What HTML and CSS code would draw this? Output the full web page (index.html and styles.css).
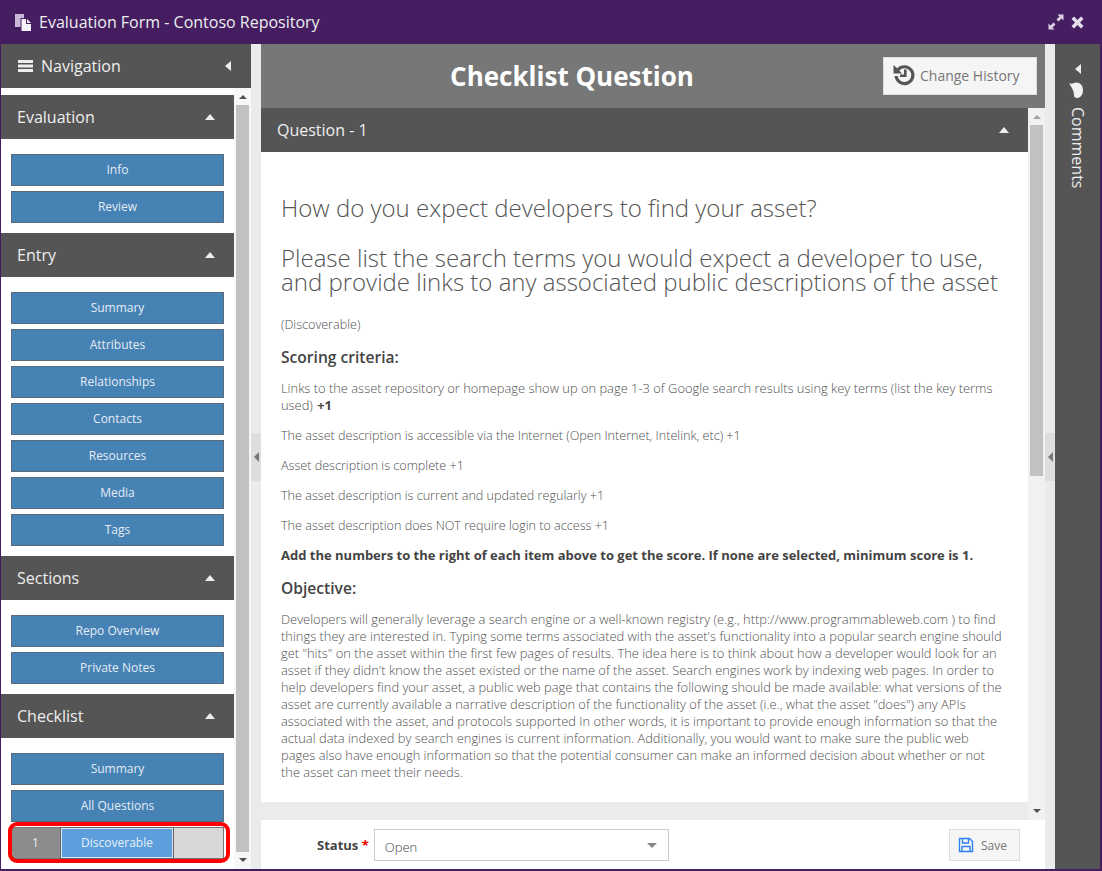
FILE: index.html
```html
<!DOCTYPE html>
<html lang="en">

<head>
    <meta charset="UTF-8">
    <title>Evaluation Form - Contoso Repository</title>
    <link rel="stylesheet" href="styles.css">
</head>

<body>
    <div class="window">
        <header class="title-bar">
            <svg class="title-icon" width="17" height="17" viewBox="0 0 17 17">
                <path d="M0 0h9v4H5.500v9H0z" fill="#c9b9d6" />
                <path d="M6.500 5H11v5h5v7H6.500z" fill="#f6f2f8" />
                <path d="M12 5l4 4h-4z" fill="#f6f2f8" />
            </svg>
            <span class="title-text">Evaluation Form - Contoso Repository</span>
            <svg class="title-action" width="16" height="16" viewBox="0 0 16 16">
                <path d="M9.500 0.500h6v6l-2-2-3 3-2-2 3-3zM6.500 15.500h-6v-6l2 2 3-3 2 2-3 3z" fill="#d9cfe0" />
            </svg>
            <svg class="title-action close" width="13" height="13" viewBox="0 0 13 13">
                <path d="M3 .5L6.500 4 10 .5 12.500 3 9 6.500l3.500 3.500-2.500 2.500L6.500 9 3 12.500.5 10 4 6.500.5 3z" fill="#e6dfeb" />
            </svg>
        </header>

        <div class="window-body">
            <aside class="nav-panel">
                <div class="nav-title">
                    <svg width="15" height="12" viewBox="0 0 15 12">
                        <path d="M0 0h15v3H0zM0 4.500h15v3H0zM0 9h15v3H0z" fill="#eee" />
                    </svg>
                    <span class="nav-title-text">Navigation</span>
                    <span class="arrow-left"></span>
                </div>
                <div class="nav-scroll">
                    <div class="nav-list">
                        <div class="section-head"><span>Evaluation</span><span class="arrow-up"></span></div>
                        <div class="section-links">
                            <a class="nav-btn">Info</a>
                            <a class="nav-btn">Review</a>
                        </div>
                        <div class="section-head"><span>Entry</span><span class="arrow-up"></span></div>
                        <div class="section-links">
                            <a class="nav-btn">Summary</a>
                            <a class="nav-btn">Attributes</a>
                            <a class="nav-btn">Relationships</a>
                            <a class="nav-btn">Contacts</a>
                            <a class="nav-btn">Resources</a>
                            <a class="nav-btn">Media</a>
                            <a class="nav-btn">Tags</a>
                        </div>
                        <div class="section-head"><span>Sections</span><span class="arrow-up"></span></div>
                        <div class="section-links">
                            <a class="nav-btn">Repo Overview</a>
                            <a class="nav-btn">Private Notes</a>
                        </div>
                        <div class="section-head"><span>Checklist</span><span class="arrow-up"></span></div>
                        <div class="section-links">
                            <a class="nav-btn">Summary</a>
                            <a class="nav-btn">All Questions</a>
                            <div class="check-row">
                                <span class="check-num">1</span>
                                <a class="check-name">Discoverable</a>
                                <span class="check-score"></span>
                            </div>
                        </div>
                    </div>
                    <div class="scrollbar nav-bar">
                        <span class="sb-up"></span>
                        <span class="sb-thumb"></span>
                        <span class="sb-down"></span>
                    </div>
                </div>
            </aside>

            <div class="gutter">
                <span class="gutter-tab"><span class="arrow-gutter"></span></span>
            </div>

            <main class="center">
                <div class="page-head">
                    <h1>Checklist Question</h1>
                    <button class="history-btn">
                        <svg width="24" height="24" viewBox="0 0 24 24">
                            <path d="M5.200 5.300A10 10 0 1 1 2.500 13h3.200a6.800 6.800 0 1 0 1.700-5.400L10 10.500H1.500V2z" fill="#555" />
                            <path d="M12 6.500h2.600v7.500H8v-2.500h4z" fill="#555" />
                        </svg>
                        Change History
                    </button>
                </div>

                <div class="question-scroll">
                    <div class="question-col">
                        <div class="question-head"><span>Question - 1</span><span class="arrow-up"></span></div>
                        <div class="question-body">
                            <h2>How do you expect developers to find your asset?</h2>
                            <h2>Please list the search terms you would expect a developer to use, and provide links to any associated public descriptions of the asset</h2>
                            <p>(Discoverable)</p>
                            <h3>Scoring criteria:</h3>
                            <p class="wide">Links to the asset repository or homepage show up on page 1-3 of Google search results using key terms (list the key terms used) <b>+1</b></p>
                            <p>The asset description is accessible via the Internet (Open Internet, Intelink, etc) +1</p>
                            <p>Asset description is complete +1</p>
                            <p>The asset description is current and updated regularly +1</p>
                            <p>The asset description does NOT require login to access +1</p>
                            <p><b>Add the numbers to the right of each item above to get the score. If none are selected, minimum score is 1.</b></p>
                            <h3>Objective:</h3>
                            <p class="wide">Developers will generally leverage a search engine or a well-known registry (e.g., http://www.programmableweb.com ) to find things they are interested in. Typing some terms associated with the asset's functionality into a popular search engine should get "hits" on the asset within the first few pages of results. The idea here is to think about how a developer would look for an asset if they didn't know the asset existed or the name of the asset. Search engines work by indexing web pages. In order to help developers find your asset, a public web page that contains the following should be made available: what versions of the asset are currently available a narrative description of the functionality of the asset (i.e., what the asset "does") any APIs associated with the asset, and protocols supported In other words, it is important to provide enough information so that the actual data indexed by search engines is current information. Additionally, you would want to make sure the public web pages also have enough information so that the potential consumer can make an informed decision about whether or not the asset can meet their needs.</p>
                        </div>
                    </div>
                    <div class="scrollbar question-bar">
                        <span class="sb-up"></span>
                        <span class="sb-thumb"></span>
                        <span class="sb-down"></span>
                    </div>
                </div>

                <div class="status-row">
                    <label class="status-label">Status <span class="required">*</span></label>
                    <div class="status-select">Open<span class="arrow-select"></span></div>
                    <button class="save-btn">
                        <svg width="16" height="16" viewBox="0 0 16 16">
                            <path d="M1.500 1.500h10l3 3v10h-13z" fill="none" stroke="#2f80f0" stroke-width="1.400" />
                            <path d="M4.500 2v4h6V2M4 14.500V9.500h8v5" fill="none" stroke="#2f80f0" stroke-width="1.400" />
                        </svg>
                        Save
                    </button>
                </div>
            </main>

            <div class="gutter right">
                <span class="gutter-tab"><span class="arrow-gutter"></span></span>
            </div>

            <aside class="comment-panel">
                <span class="arrow-left"></span>
                <svg class="comment-icon" width="15" height="17" viewBox="0 0 15 17">
                    <path d="M0 1c2 1 3 1 5 0 4-2 9 1 9 7 0 4-2 8-6 8-2 0-3-1-3-3C5 9 3 6 0 1z" fill="#f2f2f2" />
                </svg>
                <span class="comment-text">Comments</span>
            </aside>
        </div>
    </div>

    <div class="highlight"></div>
</body>

</html>
```

FILE: styles.css
```css
* {
    box-sizing: border-box;
}

html,
body {
    height: 100%;
}

body {
    margin: 0;
    overflow: hidden;
    font-family: "Open Sans", sans-serif;
    font-size: 12px;
    color: #555;
}

.window {
    position: relative;
    display: flex;
    flex-direction: column;
    width: 1102px;
    height: 871px;
    background: #451e62;
    padding: 0 2px 2px 1px;
}

.title-bar {
    display: flex;
    align-items: center;
    height: 44px;
    flex: none;
    padding: 0 16px 0 14px;
    color: #eee;
}

.title-icon {
    margin-right: 7px;
}

.title-text {
    flex: 1;
    font-size: 16px;
}

.title-action {
    margin-left: 7px;
}

.window-body {
    display: flex;
    flex: 1;
    min-height: 0;
    background: #ebebeb;
}

/* left navigation */
.nav-panel {
    display: flex;
    flex-direction: column;
    width: 250px;
    flex: none;
    background: #fff;
}

.nav-title {
    display: flex;
    align-items: center;
    height: 44px;
    flex: none;
    padding: 0 20px 0 17px;
    background: #555;
    color: #eee;
    font-size: 16px;
}

.nav-title-text {
    flex: 1;
    margin-left: 8px;
}

.arrow-left {
    width: 0;
    height: 0;
    border-style: solid;
    border-width: 5px 6px 5px 0;
    border-color: transparent #eee transparent transparent;
}

.nav-scroll {
    display: flex;
    flex: 1;
    min-height: 0;
}

.nav-list {
    width: 233px;
    flex: none;
    padding-top: 7px;
}

.section-head {
    display: flex;
    align-items: center;
    justify-content: space-between;
    height: 44px;
    padding: 0 19px 0 16px;
    background: #555;
    color: #eee;
    font-size: 16px;
}

.arrow-up {
    width: 0;
    height: 0;
    border-style: solid;
    border-width: 0 5.500px 6px;
    border-color: transparent transparent #eee;
}

.section-links {
    display: flex;
    flex-direction: column;
    gap: 5px;
    padding: 15px 10px 10px;
}

.nav-btn {
    height: 32px;
    line-height: 30px;
    text-align: center;
    font-size: 12px;
    color: #e4ecf4;
    background: #4682b4;
    border: 1px solid #5a6a7a;
}

.check-row {
    display: flex;
    height: 32px;
    border: 1px solid #777;
    background: #d8d8d8;
}

.check-num {
    width: 49px;
    padding-right: 2px;
    line-height: 30px;
    text-align: center;
    color: #eee;
    background: #8c8c8c;
}

.check-name {
    width: 112px;
    line-height: 28px;
    text-align: center;
    color: #e8f0f8;
    background: #5c9fdc;
    border: 1px solid #d6e6f4;
    outline: 1px solid #666;
}

.check-score {
    flex: 1;
}

/* fake scrollbars */
.scrollbar {
    display: flex;
    flex-direction: column;
    align-items: center;
    width: 17px;
    flex: none;
    background: #f1f1f1;
}

.sb-up,
.sb-down {
    width: 0;
    height: 0;
    flex: none;
    border-style: solid;
}

.sb-up {
    margin: 7px 0 6px;
    border-width: 0 4px 4px;
    border-color: transparent transparent #505050;
}

.sb-down {
    margin: 6px 0 7px;
    border-width: 4px 4px 0;
    border-color: #505050 transparent transparent;
}

.sb-thumb {
    width: 13px;
    background: #c1c1c1;
}

.nav-bar {
    background: #f7f7f7;
}

.nav-bar .sb-thumb {
    flex: 1;
}

.question-bar .sb-up {
    border-bottom-color: #a3a3a3;
}

.question-bar .sb-thumb {
    height: 351px;
    margin-bottom: auto;
}

.gutter {
    display: flex;
    align-items: center;
    justify-content: center;
    width: 10px;
    flex: none;
    background: #ebebeb;
}

.gutter-tab {
    display: flex;
    align-items: center;
    justify-content: center;
    width: 10px;
    height: 48px;
    background: #dedede;
}

.arrow-gutter {
    width: 0;
    height: 0;
    border-style: solid;
    border-width: 5px 5px 5px 0;
    border-color: transparent #777 transparent transparent;
}

/* center column */
.center {
    display: flex;
    flex-direction: column;
    width: 784px;
    flex: none;
}

.page-head {
    display: flex;
    align-items: center;
    height: 64px;
    flex: none;
    padding-right: 8px;
    background: #777;
}

.page-head h1 {
    flex: 1;
    margin: 0;
    text-align: center;
    color: #fff;
    font-size: 26px;
    font-weight: 700;
}

.history-btn {
    display: flex;
    align-items: center;
    gap: 4px;
    width: 154px;
    height: 38px;
    padding: 0 8px 2px;
    background: #f5f5f5;
    border: 1px solid #ddd;
    color: #777;
    font-family: "Open Sans", sans-serif;
    font-size: 14px;
}

.question-scroll {
    display: flex;
    flex: 1;
    min-height: 0;
}

.question-col {
    display: flex;
    flex-direction: column;
    width: 767px;
    flex: none;
    padding-bottom: 18px;
}

.question-head {
    display: flex;
    align-items: center;
    justify-content: space-between;
    height: 44px;
    flex: none;
    padding: 0 19px 0 16px;
    background: #555;
    color: #eee;
    font-size: 16px;
}

.question-body {
    flex: 1;
    overflow: hidden;
    background: #fff;
    padding: 44px 20px 0;
}

.question-body h2 {
    margin: 0 0 26px;
    font-size: 24px;
    font-weight: 300;
    line-height: 24px;
    color: #555;
}

.question-body h2 + p {
    margin-top: -4px;
}

.question-body h3 {
    margin: 14px 0 13px;
    font-size: 15.600px;
    font-weight: 600;
    line-height: 20px;
    color: #444;
}

.question-body p {
    margin: 0 0 13px;
    font-size: 12.600px;
    font-weight: 300;
    line-height: 17px;
    color: #505050;
}

.question-body p.wide {
    padding-right: 4px;
    font-size: 12.900px;
}

.question-body b {
    font-size: 13px;
    font-weight: 700;
    color: #444;
}

.question-body p.wide b {
    margin-left: 1px;
    font-size: 12.900px;
}

.status-row {
    display: flex;
    align-items: flex-start;
    height: 49px;
    flex: none;
    padding: 9px 25px 0 56px;
    background: #fff;
}

.status-label {
    margin-top: 7px;
    margin-right: 5px;
    font-size: 13px;
    font-weight: 700;
    color: #444;
}

.required {
    color: #e00;
}

.status-select {
    position: relative;
    width: 295px;
    height: 32px;
    padding-left: 10px;
    line-height: 35px;
    border: 1px solid #ccc;
    font-size: 13px;
    font-weight: 300;
    color: #444;
}

.arrow-select {
    position: absolute;
    top: 13px;
    right: 11px;
    border-style: solid;
    border-width: 5px 5.500px 0;
    border-color: #888 transparent transparent;
}

.save-btn {
    display: flex;
    align-items: center;
    gap: 7px;
    width: 71px;
    height: 32px;
    margin-left: auto;
    padding: 0 8px;
    background: #f5f5f5;
    border: 1px solid #ddd;
    color: #777;
    font-family: "Open Sans", sans-serif;
    font-size: 12px;
}

/* comments */
.comment-panel {
    display: flex;
    flex-direction: column;
    align-items: center;
    flex: 1;
    padding-top: 20px;
    background: #555;
    color: #eee;
}

.comment-icon {
    margin-top: 8px;
    margin-left: -3px;
}

.comment-text {
    margin-top: 8px;
    writing-mode: vertical-rl;
    font-size: 16px;
}

.highlight {
    position: absolute;
    left: 8px;
    top: 822px;
    width: 222px;
    height: 41px;
    border: 4px solid #f00;
    border-radius: 9px;
}
```
